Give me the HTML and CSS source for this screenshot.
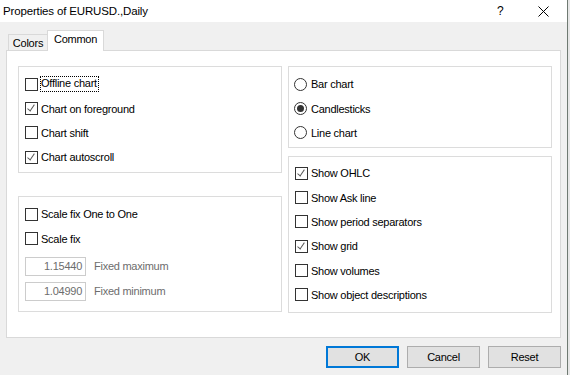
FILE: index.html
```html
<!DOCTYPE html>
<html lang="en">
<head>
    <meta charset="UTF-8">
    <title>Properties of EURUSD.,Daily</title>
    <link rel="stylesheet" href="styles.css">
</head>
<body>
    <div class="window">
        <div class="titlebar">
            <span class="title">Properties of EURUSD.,Daily</span>
            <span class="help">?</span>
            <span class="close">
                <svg width="11" height="11" viewBox="0 0 11 11"><path d="M0.5 0.5 L10.5 10.5 M10.5 0.5 L0.5 10.5" stroke="#000" stroke-width="1" fill="none"/></svg>
            </span>
        </div>

        <div class="client">
            <div class="tabs">
                <div class="tab">Colors</div>
                <div class="tab active">Common</div>
            </div>

            <div class="tab-panel">
                <div class="column">
                    <div class="group general">
                        <label class="row"><span class="check"></span><span class="focus">Offline chart</span></label>
                        <label class="row"><span class="check on"></span>Chart on foreground</label>
                        <label class="row"><span class="check"></span>Chart shift</label>
                        <label class="row"><span class="check on"></span>Chart autoscroll</label>
                    </div>
                    <div class="group scale">
                        <label class="row"><span class="check"></span>Scale fix One to One</label>
                        <label class="row"><span class="check"></span>Scale fix</label>
                        <div class="row field first">
                            <span class="input">1.15440</span>
                            <span class="muted">Fixed maximum</span>
                        </div>
                        <div class="row field">
                            <span class="input">1.04990</span>
                            <span class="muted">Fixed minimum</span>
                        </div>
                    </div>
                </div>

                <div class="column">
                    <div class="group chart-type">
                        <label class="row"><span class="radio"></span>Bar chart</label>
                        <label class="row"><span class="radio on"></span>Candlesticks</label>
                        <label class="row"><span class="radio"></span>Line chart</label>
                    </div>
                    <div class="group show">
                        <label class="row"><span class="check on"></span>Show OHLC</label>
                        <label class="row"><span class="check"></span>Show Ask line</label>
                        <label class="row"><span class="check"></span>Show period separators</label>
                        <label class="row"><span class="check on"></span>Show grid</label>
                        <label class="row"><span class="check"></span>Show volumes</label>
                        <label class="row"><span class="check"></span>Show object descriptions</label>
                    </div>
                </div>
            </div>

            <div class="buttons">
                <button class="default">OK</button>
                <button>Cancel</button>
                <button>Reset</button>
            </div>
        </div>
    </div>
</body>
</html>
```

FILE: styles.css
```css
body {
    margin: 0;
    background: #e6e6e6;
    font-family: "Liberation Sans", Arial, sans-serif;
    font-size: 11px;
    letter-spacing: -0.25px;
    color: #000;
}
.window {
    width: 567px;
    height: 375px;
    background: #f0f0f0;
    border-right: 1px solid #6f7a72;
    overflow: hidden;
}
.titlebar {
    height: 22px;
    background: #fff;
    display: flex;
    align-items: center;
}
.title {
    margin-left: 3px;
    font-size: 11.5px;
    letter-spacing: -0.15px;
    flex: 1;
}
.help {
    font-size: 12px;
    width: 12px;
    margin-right: 29px;
}
.close {
    display: flex;
    margin-right: 18px;
}
.client {
    padding-top: 8px;
}
.tabs {
    display: flex;
    align-items: flex-end;
    margin-left: 8px;
    height: 20px;
    position: relative;
    z-index: 1;
}
.tab {
    box-sizing: border-box;
    width: 40px;
    height: 16px;
    border: 1px solid #d9d9d9;
    border-bottom: none;
    background: #f0f0f0;
    text-align: center;
    line-height: 16px;
}
.tab.active {
    width: 57px;
    height: 21px;
    margin-bottom: -1px;
    margin-left: -1px;
    background: #fff;
    line-height: 17px;
}
.tab-panel {
    box-sizing: border-box;
    margin-left: 6px;
    width: 555px;
    height: 288px;
    background: #fff;
    border: 1px solid #d9d9d9;
    padding: 15px 0 0 11px;
    display: flex;
    gap: 6px;
}
.column {
    width: 264px;
    display: flex;
    flex-direction: column;
}
.group {
    box-sizing: border-box;
    border: 1px solid #dcdcdc;
    padding: 5px 0 0 6px;
}
.general {
    height: 107px;
}
.scale {
    height: 116px;
    margin-top: 23px;
}
.chart-type {
    height: 82px;
    padding-left: 5px;
}
.show {
    height: 157px;
    margin-top: 8px;
    padding-top: 4px;
}
.row {
    height: 24.35px;
    display: flex;
    align-items: center;
    gap: 3px;
}
.chart-type .row {
    gap: 4px;
}
.check, .radio {
    box-sizing: border-box;
    width: 13px;
    height: 13px;
    border: 1px solid #333;
    background: #fff;
    flex-shrink: 0;
    position: relative;
}
.check.on::after {
    content: "";
    position: absolute;
    left: 3px;
    top: 0px;
    width: 3px;
    height: 7px;
    border-right: 1px solid #555;
    border-bottom: 1px solid #555;
    transform: rotate(40deg) skewX(6deg);
}
.radio {
    border-radius: 50%;
}
.radio.on::after {
    content: "";
    position: absolute;
    left: 2px;
    top: 2px;
    width: 7px;
    height: 7px;
    border-radius: 50%;
    background: #333;
}
.focus {
    outline: 1px dotted #000;
    outline-offset: 0;
    padding: 0 1px 1px 0;
    line-height: 13px;
}
.field {
    height: 25px;
    gap: 8px;
}
.field.first {
    margin-top: 3px;
}
.input {
    box-sizing: border-box;
    width: 61px;
    height: 19px;
    border: 1px solid #ccc;
    color: #6d6d6d;
    text-align: right;
    padding-right: 3px;
    line-height: 17px;
}
.muted {
    color: #6d6d6d;
}
.buttons {
    display: flex;
    justify-content: flex-end;
    gap: 8px;
    margin-top: 8px;
    margin-right: 6px;
}
button {
    box-sizing: border-box;
    width: 73px;
    height: 22px;
    border: 1px solid #adadad;
    background: #e1e1e1;
    font-family: inherit;
    font-size: 11px;
    letter-spacing: -0.25px;
    color: #000;
    padding: 0;
}
button.default {
    border: 2px solid #0078d7;
}
```
